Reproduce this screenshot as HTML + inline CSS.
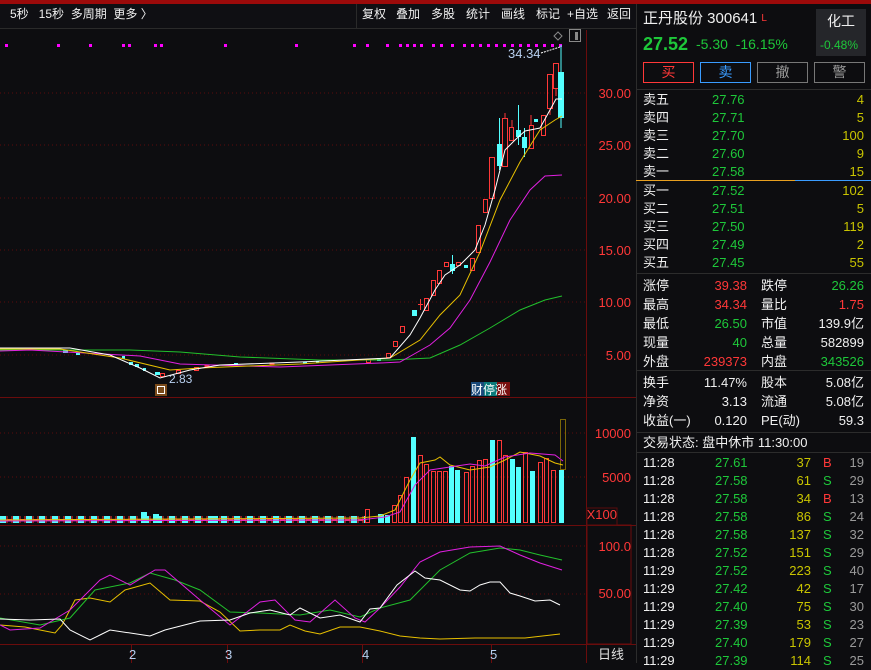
<!DOCTYPE html>
<html><head><meta charset="utf-8"><style>
*{margin:0;padding:0;box-sizing:border-box}
body{width:871px;height:663px;background:#0d0d10;overflow:hidden;font-family:"Liberation Sans","Noto Sans CJK SC",sans-serif;color:#e8e8e8;position:relative}
.a{position:absolute;white-space:nowrap;font-size:13px;line-height:16px}
.g{color:#1ec83a}.r{color:#ff3838}.y{color:#c9c400}.w{color:#f0f0f0}.gr{color:#9a9a9a}.b{color:#3a9cff}
.rt{text-align:right}
.hl{position:absolute;left:636px;width:235px;height:1px;background:#2c2c2c}
.btn{position:absolute;top:62px;width:51px;height:21px;border:1px solid #777;font-size:14px;line-height:19px;text-align:center}
</style></head><body>
<div style="position:absolute;left:0;top:0;width:871px;height:4px;background:#9b0a0a"></div>
<!-- toolbar -->
<div style="position:absolute;left:0;top:4px;width:636px;height:25px;background:#0f0f13;border-bottom:1px solid #2a2a2a"></div>
<div class="a w" style="left:10px;top:6px;font-size:12px">5秒 &nbsp;&nbsp;15秒 &nbsp;多周期 &nbsp;更多 〉</div>
<div style="position:absolute;left:356px;top:4px;width:1px;height:25px;background:#2a2a2a"></div>
<div class="a w" style="left:362px;top:6px;font-size:12px;word-spacing:0">复权</div>
<div class="a w" style="left:396px;top:6px;font-size:12px">叠加</div>
<div class="a w" style="left:431px;top:6px;font-size:12px">多股</div>
<div class="a w" style="left:466px;top:6px;font-size:12px">统计</div>
<div class="a w" style="left:501px;top:6px;font-size:12px">画线</div>
<div class="a w" style="left:536px;top:6px;font-size:12px">标记</div>
<div class="a w" style="left:567px;top:6px;font-size:12px">+自选</div>
<div class="a w" style="left:607px;top:6px;font-size:12px">返回</div>

<svg width="636" height="663" style="position:absolute;left:0;top:0" xmlns="http://www.w3.org/2000/svg">
<defs>
<pattern id="vp" x="0" y="0" width="13" height="10" patternUnits="userSpaceOnUse">
<rect x="0" y="0" width="6" height="10" fill="#54ffff"/><rect x="7" y="0.5" width="5" height="9" fill="none" stroke="#ff3838"/>
</pattern>
</defs>
<g stroke="#5a0c0c" stroke-dasharray="1,3">
<line x1="0" y1="93" x2="586" y2="93"/><line x1="0" y1="145" x2="586" y2="145"/><line x1="0" y1="198" x2="586" y2="198"/><line x1="0" y1="250" x2="586" y2="250"/><line x1="0" y1="302" x2="586" y2="302"/><line x1="0" y1="355" x2="586" y2="355"/>
<line x1="0" y1="433" x2="586" y2="433"/><line x1="0" y1="477" x2="586" y2="477"/>
<line x1="0" y1="546" x2="586" y2="546"/><line x1="0" y1="594" x2="586" y2="594"/>
</g>
<g stroke="#6a0c0c">
<line x1="586.5" y1="30" x2="586.5" y2="663"/>
<line x1="0" y1="397.5" x2="636" y2="397.5"/>
<line x1="0" y1="525.5" x2="636" y2="525.5"/>
<line x1="0" y1="644.5" x2="636" y2="644.5"/>
<line x1="131.5" y1="644" x2="131.5" y2="663"/><line x1="227.5" y1="644" x2="227.5" y2="663"/><line x1="362.5" y1="644" x2="362.5" y2="663"/><line x1="491.5" y1="644" x2="491.5" y2="663"/>
</g>
<rect x="587" y="525" width="44" height="119" fill="none" stroke="#6a0c0c"/>
<!-- axis labels -->
<g fill="#ff3838" font-family="Liberation Sans" font-size="13" text-anchor="end">
<text x="631" y="98">30.00</text><text x="631" y="150">25.00</text><text x="631" y="203">20.00</text><text x="631" y="255">15.00</text><text x="631" y="307">10.00</text><text x="631" y="360">5.00</text>
<text x="631" y="438">10000</text><text x="631" y="482">5000</text><text x="617" y="519">X100</text>
<text x="631" y="551">100.0</text><text x="631" y="598">50.00</text>
</g>
<rect x="587" y="508" width="30" height="17" fill="none" stroke="#5a0c0c"/>
<g fill="#b8d0f0" font-family="Liberation Sans" font-size="13">
<text x="129" y="659">2</text><text x="225" y="659">3</text><text x="362" y="659">4</text><text x="490" y="659">5</text>
</g>
<text x="598" y="659" fill="#e0e0e0" font-size="13" font-family="Liberation Sans,Noto Sans CJK SC">日线</text>
<!-- magenta dots -->
<g fill="#ff00ff">
<rect x="5" y="44" width="3" height="3"/><rect x="57" y="44" width="3" height="3"/><rect x="89" y="44" width="3" height="3"/><rect x="122" y="44" width="3" height="3"/><rect x="128" y="44" width="3" height="3"/><rect x="154" y="44" width="3" height="3"/><rect x="160" y="44" width="3" height="3"/><rect x="224" y="44" width="3" height="3"/><rect x="295" y="44" width="3" height="3"/><rect x="353" y="44" width="3" height="3"/><rect x="366" y="44" width="3" height="3"/><rect x="386" y="44" width="3" height="3"/><rect x="399" y="44" width="3" height="3"/><rect x="406" y="44" width="3" height="3"/><rect x="413" y="44" width="3" height="3"/><rect x="420" y="44" width="3" height="3"/><rect x="432" y="44" width="3" height="3"/><rect x="440" y="44" width="3" height="3"/><rect x="451" y="44" width="3" height="3"/>
<rect x="463" y="44" width="3" height="3"/><rect x="471" y="44" width="3" height="3"/><rect x="479" y="44" width="3" height="3"/><rect x="487" y="44" width="3" height="3"/><rect x="495" y="44" width="3" height="3"/><rect x="503" y="44" width="3" height="3"/><rect x="511" y="44" width="3" height="3"/><rect x="519" y="44" width="3" height="3"/><rect x="527" y="44" width="3" height="3"/><rect x="535" y="44" width="3" height="3"/><rect x="543" y="44" width="3" height="3"/><rect x="551" y="44" width="3" height="3"/><rect x="559" y="44" width="3" height="3"/>
</g>
<path d="M554 36 l4 -4 l4 4 l-4 4z" fill="none" stroke="#888"/>
<rect x="569.5" y="29.5" width="11" height="12" fill="none" stroke="#888"/><rect x="575" y="32" width="3" height="8" fill="#888"/>
<text x="508" y="58" fill="#b8d0f0" font-family="Liberation Sans" font-size="13">34.34</text>
<path d="M541 53 L560 47" stroke="#fff" stroke-dasharray="2,1"/>
<!-- early candles -->
<g fill="#54ffff">
<rect x="63" y="350" width="5" height="3"/><rect x="76" y="352" width="4" height="3"/><rect x="122" y="356" width="3" height="3"/><rect x="129" y="362" width="4" height="3"/><rect x="135" y="364" width="4" height="3"/><rect x="143" y="368" width="3" height="3"/><rect x="155" y="372" width="5" height="3"/><rect x="234" y="363" width="4" height="2"/><rect x="303" y="362" width="4" height="2"/><rect x="316" y="361" width="3" height="2"/><rect x="377" y="358" width="4" height="3"/>
</g>
<g stroke="#ff3838" fill="none">
<rect x="160.5" y="373.5" width="4" height="3"/><rect x="176.5" y="370.5" width="4" height="3"/><rect x="194.5" y="367.5" width="4" height="3"/><rect x="205" y="365" width="4" height="2" fill="#ff3838"/><rect x="270" y="363" width="4" height="2" fill="#ff3838"/><rect x="366.5" y="359.5" width="4" height="3"/><rect x="386.5" y="353.5" width="4" height="4"/>
</g>
<text x="169" y="383" fill="#b8d0f0" font-family="Liberation Sans" font-size="12">2.83</text>
<rect x="155" y="384" width="12" height="12" fill="#7a4a1a"/><rect x="157.5" y="386.5" width="7" height="7" fill="none" stroke="#fff"/>
<!-- late candles -->
<g stroke="#ff3838" fill="none">
<rect x="393.5" y="341.5" width="4" height="5"/><rect x="400.5" y="326.5" width="4" height="6"/>
<line x1="420.5" y1="299" x2="420.5" y2="310"/><line x1="418" y1="304.5" x2="423" y2="304.5"/>
<rect x="424.5" y="298.5" width="4" height="12"/><rect x="431.5" y="280.5" width="4" height="15"/><rect x="437.5" y="270.5" width="4" height="13"/><rect x="444.5" y="262.5" width="4" height="4"/><rect x="456.5" y="262.5" width="4" height="3"/><rect x="470.5" y="258.5" width="4" height="12"/><rect x="476.5" y="225.5" width="4" height="27"/><rect x="483.5" y="199.5" width="4" height="13"/><rect x="489.5" y="157.5" width="5" height="41"/><rect x="502.5" y="118.5" width="5" height="48"/><rect x="509.5" y="127.5" width="4" height="13"/><rect x="529.5" y="125.5" width="4" height="23"/><rect x="541.5" y="115.5" width="4" height="20"/><rect x="547.5" y="74.5" width="5" height="34"/><rect x="553.5" y="63.5" width="5" height="25"/>
<line x1="505" y1="113" x2="505" y2="118"/><line x1="512" y1="120" x2="512" y2="127"/><line x1="531" y1="115" x2="531" y2="125"/><line x1="550" y1="108" x2="550" y2="115"/><line x1="556" y1="88" x2="556" y2="96"/>
</g>
<g fill="#54ffff">
<rect x="412" y="310" width="5" height="6"/><rect x="450" y="264" width="5" height="7"/><line x1="452.5" y1="255" x2="452.5" y2="274" stroke="#54ffff"/>
<rect x="464" y="265" width="4" height="3"/>
<rect x="497" y="144" width="5" height="22"/><line x1="499.5" y1="118" x2="499.5" y2="170" stroke="#54ffff"/>
<rect x="516" y="130" width="5" height="7"/><line x1="518.5" y1="105" x2="518.5" y2="145" stroke="#54ffff"/>
<rect x="522" y="137" width="5" height="11"/><line x1="524.5" y1="128" x2="524.5" y2="157" stroke="#54ffff"/>
<rect x="534" y="119" width="4" height="3"/>
<rect x="558" y="72" width="6" height="46"/><line x1="561" y1="45" x2="561" y2="128" stroke="#54ffff"/>
</g>
<!-- MAs -->
<g fill="none" stroke-width="1">
<polyline stroke="#22c02c" points="0,350 130,350 180,352 240,357 320,360 390,360 430,358 460,345 490,328 520,310 545,300 562,296"/>
<polyline stroke="#e020e0" points="0,351 30,350 140,356 180,364 280,367 380,363 400,362 430,345 450,328 470,300 490,262 510,220 530,190 545,176 562,175"/>
<polyline stroke="#e8c000" points="0,349 60,349 120,358 170,370 200,368 300,364 390,358 420,340 440,315 460,295 480,252 500,200 520,162 540,130 555,120 562,116"/>
<polyline stroke="#ffffff" points="0,348 70,348 110,355 140,368 160,378 190,370 220,365 300,362 390,358 410,335 420,318 435,290 445,275 460,265 475,250 485,225 495,190 505,150 515,140 525,131 540,128 550,110 556,99 562,99"/>
</g>
<rect x="471" y="382" width="13" height="14" fill="#1a4a7a"/><rect x="484" y="382" width="13" height="14" fill="#0a7a7a"/><rect x="497" y="382" width="13" height="14" fill="#7a1010"/>
<text x="471" y="394" fill="#fff" font-size="12" font-family="Noto Sans CJK SC,sans-serif">财停涨</text>
<!-- volume -->
<rect x="0" y="516" width="366" height="7" fill="url(#vp)"/>
<g fill="#54ffff"><rect x="141" y="512" width="6" height="11"/><rect x="153" y="514" width="6" height="9"/><rect x="212" y="516" width="6" height="7"/><rect x="378" y="514" width="6" height="9"/><rect x="385" y="515" width="5" height="8"/>
<rect x="411" y="437" width="5" height="86"/><rect x="449" y="466" width="5" height="57"/><rect x="455" y="470" width="5" height="53"/><rect x="490" y="440" width="5" height="83"/><rect x="510" y="459" width="5" height="64"/><rect x="516" y="467" width="5" height="56"/><rect x="530" y="471" width="5" height="52"/><rect x="559" y="470" width="5" height="53"/></g>
<g fill="none" stroke="#ff3838">
<rect x="365.5" y="509.5" width="4" height="13"/><rect x="392.5" y="505.5" width="4" height="17"/><rect x="398.5" y="495.5" width="4" height="27"/><rect x="404.5" y="477.5" width="4" height="45"/><rect x="418.5" y="455.5" width="4" height="67"/><rect x="424.5" y="464.5" width="4" height="58"/><rect x="431.5" y="471.5" width="4" height="51"/><rect x="437.5" y="471.5" width="4" height="51"/><rect x="443.5" y="471.5" width="4" height="51"/><rect x="464.5" y="472.5" width="4" height="50"/><rect x="470.5" y="466.5" width="4" height="56"/><rect x="477.5" y="460.5" width="4" height="62"/><rect x="483.5" y="459.5" width="4" height="63"/><rect x="497.5" y="440.5" width="4" height="82"/><rect x="503.5" y="455.5" width="4" height="67"/><rect x="523.5" y="452.5" width="4" height="70"/><rect x="538.5" y="462.5" width="4" height="60"/><rect x="544.5" y="458.5" width="4" height="64"/><rect x="551.5" y="470.5" width="4" height="52"/>
</g>
<rect x="560.5" y="419.5" width="5" height="50" fill="none" stroke="#e8c000" stroke-dasharray="1,1"/>
<g fill="none">
<polyline stroke="#e8c000" points="0,520 360,518 380,516 395,510 410,480 420,463 435,460 440,457 450,465 470,470 490,467 505,460 520,452 540,456 555,463 563,465"/>
<polyline stroke="#e020e0" points="0,521 360,520 385,517 400,512 415,485 430,470 450,467 470,464 485,466 505,457 530,453 555,455 563,461"/>
</g>
<!-- indicator -->
<g fill="none">
<polyline stroke="#e8c000" points="0,625 25,627 40,630 55,633 62,625 75,600 90,598 110,602 125,590 150,583 170,600 200,601 220,612 240,631 260,630 280,630 290,625 305,631 320,634 340,627 360,627 380,631 400,636 420,638 440,639 475,638 525,638 560,634"/>
<polyline stroke="#22c02c" points="0,618 40,625 70,618 95,590 130,583 150,573 175,580 200,590 230,612 260,613 300,615 330,610 360,617 380,608 410,600 440,570 470,553 500,548 520,550 540,555 562,560"/>
<polyline stroke="#e020e0" points="0,625 10,630 40,628 70,610 100,580 110,575 130,585 155,570 165,570 200,600 230,625 260,602 275,600 295,620 310,622 335,600 355,618 365,622 380,608 400,587 420,562 440,552 470,547 500,546 520,555 540,563 562,570"/>
<polyline stroke="#ffffff" points="0,619 30,620 60,619 70,630 90,640 100,635 110,630 150,636 165,630 200,621 230,620 250,613 270,610 290,615 300,608 320,618 340,615 360,622 370,609 380,608 397,585 415,571 425,578 440,580 460,590 470,591 480,585 490,582 500,582 510,593 520,596 535,601 550,600 560,605"/>
</g>
</svg>

<!-- right panel -->
<div style="position:absolute;left:636px;top:4px;width:1px;height:659px;background:#2c2c2c"></div>
<div class="a w" style="left:643px;top:10px;font-size:15px;line-height:18px">正丹股份 300641 <span class="r" style="font-size:10px;vertical-align:top">L</span></div>
<div style="position:absolute;left:816px;top:9px;width:50px;height:47px;background:#25262a"></div>
<div class="a w" style="left:827px;top:13px;font-size:14px">化工</div>
<div class="a g" style="left:820px;top:37px;font-size:12px">-0.48%</div>
<div class="a g" style="left:643px;top:34px;font-size:18px;line-height:20px;font-weight:bold">27.52</div>
<div class="a g" style="left:696px;top:36px;font-size:14px">-5.30 &nbsp;-16.15%</div>
<div class="btn r" style="left:643px;border-color:#ff3838">买</div>
<div class="btn b" style="left:700px;border-color:#3a9cff">卖</div>
<div class="btn gr" style="left:757px">撤</div>
<div class="btn gr" style="left:814px">警</div>
<div class="hl" style="top:89px"></div>
<div class="a w" style="left:643px;top:91px;line-height:18px">卖五<br>卖四<br>卖三<br>卖二<br>卖一</div>
<div class="a g" style="left:712px;top:91px;line-height:18px">27.76<br>27.71<br>27.70<br>27.60<br>27.58</div>
<div class="a y rt" style="right:7px;top:91px;line-height:18px">4<br>5<br>100<br>9<br>15</div>
<div style="position:absolute;left:636px;top:180px;width:159px;height:1px;background:#e8a020"></div>
<div style="position:absolute;left:795px;top:180px;width:76px;height:1px;background:#3a9cff"></div>
<div class="a w" style="left:643px;top:182px;line-height:18px">买一<br>买二<br>买三<br>买四<br>买五</div>
<div class="a g" style="left:712px;top:182px;line-height:18px">27.52<br>27.51<br>27.50<br>27.49<br>27.45</div>
<div class="a y rt" style="right:7px;top:182px;line-height:18px">102<br>5<br>119<br>2<br>55</div>
<div class="hl" style="top:273px"></div>
<div class="a w" style="left:643px;top:276px;line-height:19px">涨停<br>最高<br>最低<br>现量<br>外盘</div>
<div class="a rt" style="right:124px;top:276px;line-height:19px"><span class="r">39.38</span><br><span class="r">34.34</span><br><span class="g">26.50</span><br><span class="g">40</span><br><span class="r">239373</span></div>
<div class="a w" style="left:761px;top:276px;line-height:19px">跌停<br>量比<br>市值<br>总量<br>内盘</div>
<div class="a rt" style="right:7px;top:276px;line-height:19px"><span class="g">26.26</span><br><span class="r">1.75</span><br><span class="w">139.9亿</span><br><span class="w">582899</span><br><span class="g">343526</span></div>
<div class="hl" style="top:370px"></div>
<div class="a w" style="left:643px;top:373px;line-height:19px">换手<br>净资<br>收益(一)</div>
<div class="a w rt" style="right:124px;top:373px;line-height:19px">11.47%<br>3.13<br>0.120</div>
<div class="a w" style="left:761px;top:373px;line-height:19px">股本<br>流通<br>PE(动)</div>
<div class="a w rt" style="right:7px;top:373px;line-height:19px">5.08亿<br>5.08亿<br>59.3</div>
<div class="hl" style="top:432px"></div>
<div class="a w" style="left:643px;top:435px">交易状态: 盘中休市 11:30:00</div>
<div class="hl" style="top:452px"></div>
<div class="a w" style="left:643px;top:454px;line-height:18px">11:28<br>11:28<br>11:28<br>11:28<br>11:28<br>11:28<br>11:29<br>11:29<br>11:29<br>11:29<br>11:29<br>11:29</div>
<div class="a g" style="left:715px;top:454px;line-height:18px">27.61<br>27.58<br>27.58<br>27.58<br>27.58<br>27.52<br>27.52<br>27.42<br>27.40<br>27.39<br>27.40<br>27.39</div>
<div class="a y rt" style="right:60px;top:454px;line-height:18px">37<br>61<br>34<br>86<br>137<br>151<br>223<br>42<br>75<br>53<br>179<br>114</div>
<div class="a" style="left:823px;top:454px;line-height:18px"><span class="r">B</span><br><span class="g">S</span><br><span class="r">B</span><br><span class="g">S</span><br><span class="g">S</span><br><span class="g">S</span><br><span class="g">S</span><br><span class="g">S</span><br><span class="g">S</span><br><span class="g">S</span><br><span class="g">S</span><br><span class="g">S</span></div>
<div class="a gr rt" style="right:7px;top:454px;line-height:18px">19<br>29<br>13<br>24<br>32<br>29<br>40<br>17<br>30<br>23<br>27<br>25</div>
</body></html>
